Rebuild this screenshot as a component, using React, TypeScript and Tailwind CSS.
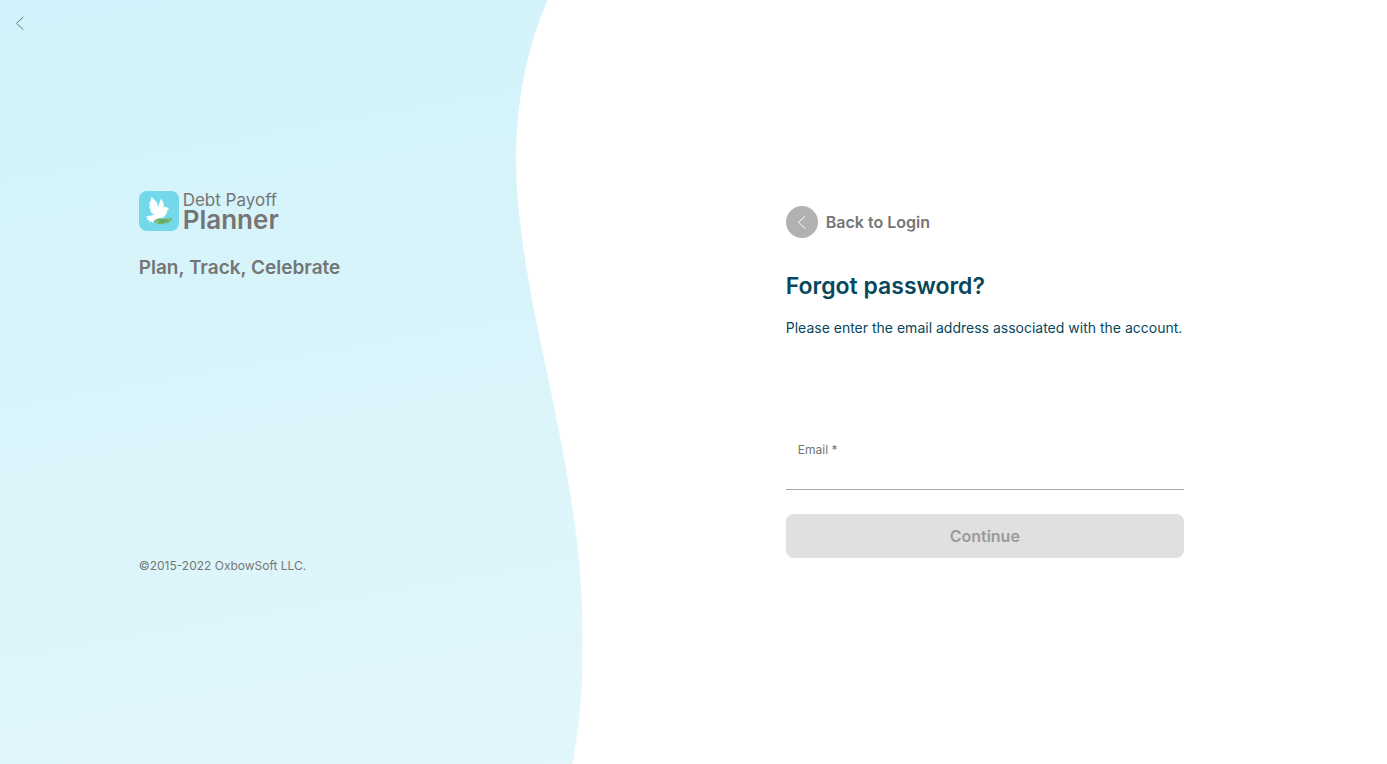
import { useState } from 'react';

function Chevron({ className }: { className: string }) {
  return (
    <svg viewBox="0 0 16 16" className={className} fill="none" stroke="currentColor" strokeLinecap="round" strokeLinejoin="round" aria-hidden="true">
      <path d="M11 2.2 L4.5 8.3 L11 14.4" />
    </svg>
  );
}

function Wave() {
  return (
    <svg viewBox="0 0 583 764" preserveAspectRatio="none" className="absolute inset-0 h-full w-full" aria-hidden="true">
      <defs>
        <linearGradient id="sky" gradientUnits="userSpaceOnUse" x1="220" y1="-30" x2="365" y2="795">
          <stop offset="0" stopColor="#d1f2fa" />
          <stop offset="1" stopColor="#e2f7fb" />
        </linearGradient>
      </defs>
      <path
        fill="url(#sky)"
        d="M0 0 H548 C528 46 516.5 100 516.5 160 C516.5 228 534 311 549.5 382 C566 463 583 545 583 630 V655 C583 694 579 730 573 764 H0 Z"
      />
    </svg>
  );
}

function DoveLogo() {
  return (
    <svg viewBox="0 0 40 40" className="size-10 shrink-0" aria-hidden="true">
      <rect width="40" height="40" rx="8" fill="#72d8ea" />
      <path fill="#72b266" d="M14.6 30.4 L19.4 27 L25 28 L31.5 26.8 L33.2 28.6 L29.5 31.6 L21 33.6 Z" />
      <path fill="#62a559" d="M20 30.2 L25 28.8 L28.4 29.6 L23.4 31.6 Z" />
      <path fill="#a3cc90" d="M16.4 30.4 L18.8 29.2 L19.8 30.2 L18 31.2 Z M28.8 28.4 L30.8 27.8 L31.6 28.6 L29.8 29.6 Z" />
      <path
        fill="#ffffff"
        d="M12.8 6 C14 7.6 15.6 8.6 17 10.6 C18.4 12.6 19 14.6 19.2 17.2 C19.4 14.2 20.6 10.6 22.2 7.4 C22.8 9 23.6 9.8 24 11.2 C25 12.8 25 14.4 24.6 16.4 C25.8 15.4 27.4 15.6 28.4 16.8 L30.4 18.4 L28.4 18.9 C28 23 25.4 27 20.6 27.2 C18 27.4 16.6 28 15.2 29.4 L13.8 32 L12.6 30.4 L10.6 31 L10.2 29.2 L7.4 28.4 L8.6 27 L7 25.2 L9.8 24.8 C12 24.6 13.6 24.4 15 23.2 C12.6 22.2 11.4 20.6 11 19.2 L12.2 19.2 C10.8 18 10.2 16.4 10.2 14.8 L11.4 15.2 C10.4 13.4 10.2 11.6 10.8 10 L11.8 11 C11.6 9.2 12 7.4 12.8 6 Z"
      />
    </svg>
  );
}

export default function App() {
  const [email, setEmail] = useState('');

  return (
    <div className="flex min-h-screen bg-white font-['Inter',sans-serif] text-[#757575]">
      <aside className="relative w-[42%] shrink-0">
        <Wave />
        <button type="button" aria-label="Back" className="absolute top-[15px] left-3 text-[#757575]">
          <Chevron className="size-4" />
        </button>
        <div className="relative flex h-screen flex-col justify-between py-[25vh] pl-[10vw]">
          <div>
            <div className="flex items-start gap-1">
              <DoveLogo />
              <div className="flex flex-col">
                <span className="text-[17px] leading-[18px]">Debt Payoff</span>
                <span className="text-[26px] leading-[22px] font-semibold">Planner</span>
              </div>
            </div>
            <h2 className="mt-6 text-[19px] leading-[26px] font-semibold">Plan, Track, Celebrate</h2>
          </div>
          <p className="text-xs leading-[14px]">©2015-2022 OxbowSoft LLC.</p>
        </div>
      </aside>

      <main className="flex flex-1 items-center justify-center">
        <form className="flex w-full max-w-[398px] flex-col" onSubmit={(e) => e.preventDefault()}>
          <a href="#login" className="flex items-center gap-2 self-start text-base font-semibold">
            <span className="flex size-8 items-center justify-center rounded-full bg-[#b1b1b1] text-white">
              <Chevron className="size-4" />
            </span>
            Back to Login
          </a>
          <h1 className="mt-8 text-[23px] leading-8 font-semibold text-[#07485c]">Forgot password?</h1>
          <p className="mt-4 text-sm leading-5 text-[#07485c]">Please enter the email address associated with the account.</p>
          <div className="mt-24 flex flex-col border-b border-[#a9a9a9] pt-1.5">
            <label htmlFor="email" className="px-3 text-xs leading-5">Email *</label>
            <input
              id="email"
              type="email"
              required
              value={email}
              onChange={(e) => setEmail(e.target.value)}
              className="h-[29px] px-3 text-base text-[#07485c] outline-none"
            />
          </div>
          <button
            type="submit"
            disabled={!email}
            className="mt-6 h-11 rounded-lg bg-[#07485c] text-base font-semibold text-white disabled:bg-[#e0e0e0] disabled:text-[#9a9a9a]"
          >
            Continue
          </button>
        </form>
      </main>
    </div>
  );
}
